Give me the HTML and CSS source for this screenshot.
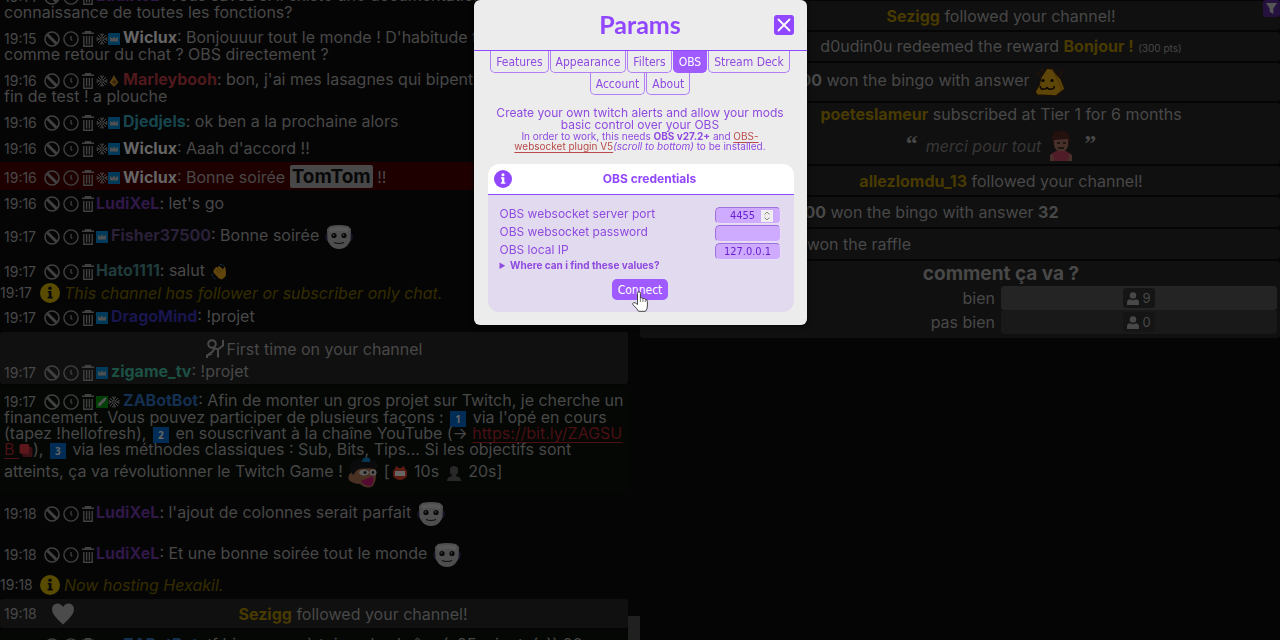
FILE: index.html
```html
<!DOCTYPE html>
<html lang="fr">
<head>
<meta charset="utf-8">
<title>Twitch chat</title>
<link rel="stylesheet" href="styles.css">
</head>
<body>
<svg class="sprite" aria-hidden="true">
  <symbol id="ban" viewBox="0 0 16 16"><circle cx="8" cy="8" r="7" fill="none" stroke="currentColor" stroke-width="1.6"/><path d="M3.4 3.8 12.4 12.6" stroke="currentColor" stroke-width="3"/></symbol>
  <symbol id="clock" viewBox="0 0 16 16"><circle cx="8" cy="8" r="7.1" fill="none" stroke="currentColor" stroke-width="1.4"/><path d="M8 5V8.4L9.4 9.6" fill="none" stroke="currentColor" stroke-width="1.3"/></symbol>
  <symbol id="trash" viewBox="0 0 12 16"><path d="M0 2.3H12M3.5 2V.7h5V2M1.8 5V15.2H10.2V5M4.6 5v8.5M7.4 5v8.5" fill="none" stroke="currentColor" stroke-width="1.4"/></symbol>
  <symbol id="flake" viewBox="0 0 12 12"><path d="M6 .5v11M.5 6h11M2 2l8 8M10 2l-8 8M4 .8 6 2.5 8 .8M4 11.200 6 9.500 8 11.200M.8 4 2.500 6 .8 8M11.200 4 9.500 6 11.200 8" stroke="#484848" fill="none" stroke-width="1"/><circle cx="6" cy="6" r="1.600" fill="#222"/></symbol>
  <symbol id="crown" viewBox="0 0 12 12"><path fill="#003a5a" d="M0 0h12v12H0z"/><path fill="#505050" d="M2 3.800 4.200 5.800 6 3.600 7.800 5.800 10 3.800V8.600H2z"/></symbol>
  <symbol id="gem" viewBox="0 0 12 12"><path d="M6 0 10.500 7.500 6 12 1.500 7.500z" fill="#4c3611"/><path d="M6 1v10L2 7.500z" fill="#5a3e10"/><circle cx="6" cy="7" r="1.600" fill="#2b2008"/></symbol>
  <symbol id="sword" viewBox="0 0 12 12"><path fill="#003f05" d="M0 0h12v12H0z"/><path d="M10.500 1.500 10 4 5 9 3 7 8 2zM2.500 6.500 5.600 9.600 4.600 10 3.700 9.400 2.200 10.600 1.500 9.900 2.700 8.400 2 7.300z" fill="#555"/></symbol>
  <symbol id="info" viewBox="0 0 20 20"><circle cx="10" cy="10" r="10" fill="currentColor"/><g class="info-mark"><circle cx="10" cy="5.200" r="1.700"/><path d="M7.800 8h3.700v5.800h1.200v1.600H7.600v-1.600h1.200V9.600H7.800z"/></g></symbol>
  <symbol id="face" viewBox="0 0 30 28"><path d="M1 14q0-3 4-6v12q-4-3-4-6zM29 14q0-3-4-6v12q4-3 4-6z" fill="#171225"/><path d="M6 3Q15 1 24 3L27 6 26.500 17Q25 22 20 25 15 27 10 25 5 22 3.500 17L3 6z" fill="#4e4e4e"/><path d="M6 5Q15 3 24 5V9Q15 7 6 9z" fill="#585858"/><circle cx="10" cy="12.500" r="2.600" fill="#080808"/><circle cx="20" cy="12.500" r="2.600" fill="#080808"/><circle cx="9.500" cy="12" r=".8" fill="#555"/><circle cx="19.500" cy="12" r=".8" fill="#555"/><path d="M10 19.500q5 2 10 0" fill="none" stroke="#111" stroke-width="1.200"/></symbol>
  <symbol id="hand" viewBox="0 0 16 16"><path d="M2.500 6 4 4.500 5 3 6.500 3.500 8 2 9.500 3 12 5.500 13 3 14.500 3.500 15 9 14.500 12.500 11 15.500 8 14.500 2.500 8.500z" fill="#60450d"/><path d="M4.500 5l4 4.500M6.500 3.500l4 4.500" stroke="#3d2c0b" stroke-width=".7"/><path d="M9 .7q3-.2 4.500 1.500M1 10q.5 4 4 5" fill="none" stroke="#0a3c50" stroke-width="1" stroke-dasharray="2 1"/></symbol>
  <symbol id="heart" viewBox="0 0 22 22"><path d="M11 21.500Q0 12 0 6.500 0 1 5.500 .5 9 .5 11 4 13 .5 16.500 .5 22 1 22 6.500 22 12 11 21.500z" fill="#4b4b4b"/></symbol>
  <symbol id="user" viewBox="0 0 12 13"><circle cx="6" cy="3.500" r="3.200" fill="currentColor"/><path d="M0 13V10.500Q0 7.600 3.200 7.300Q6 9 8.800 7.300 12 7.600 12 10.500V13z" fill="currentColor"/></symbol>
</svg>

<main class="app">
  <section class="chat">
    <article class="msg"><time>19:14</time><span class="tools"><svg class="i16"><use href="#ban"/></svg><svg class="i16"><use href="#clock"/></svg><svg class="i12"><use href="#trash"/></svg></span><b class="ludi">LudiXeL</b>: Vous savez si il existe une documentation pour prendre connaissance de toutes les fonctions?</article>
    <article class="msg"><time>19:15</time><span class="tools"><svg class="i16"><use href="#ban"/></svg><svg class="i16"><use href="#clock"/></svg><svg class="i12"><use href="#trash"/></svg></span><span class="badges"><svg><use href="#flake"/></svg><svg><use href="#crown"/></svg></span><b>Wiclux</b>: Bonjouuur tout le monde ! D'habitude tu utilises quoi comme retour du chat ? OBS directement ?</article>
    <article class="msg"><time>19:16</time><span class="tools"><svg class="i16"><use href="#ban"/></svg><svg class="i16"><use href="#clock"/></svg><svg class="i12"><use href="#trash"/></svg></span><span class="badges"><svg><use href="#flake"/></svg><svg><use href="#gem"/></svg></span><b class="marley">Marleybooh</b>: bon, j'ai mes lasagnes qui bipent, c'est donc bien la fin de test ! a plouche</article>
    <article class="msg"><time>19:16</time><span class="tools"><svg class="i16"><use href="#ban"/></svg><svg class="i16"><use href="#clock"/></svg><svg class="i12"><use href="#trash"/></svg></span><span class="badges"><svg><use href="#flake"/></svg><svg><use href="#crown"/></svg></span><b class="djed">Djedjels</b>: ok ben a la prochaine alors</article>
    <article class="msg"><time>19:16</time><span class="tools"><svg class="i16"><use href="#ban"/></svg><svg class="i16"><use href="#clock"/></svg><svg class="i12"><use href="#trash"/></svg></span><span class="badges"><svg><use href="#flake"/></svg><svg><use href="#crown"/></svg></span><b>Wiclux</b>: Aaah d'accord !!</article>
    <article class="msg mention"><time>19:16</time><span class="tools"><svg class="i16"><use href="#ban"/></svg><svg class="i16"><use href="#clock"/></svg><svg class="i12"><use href="#trash"/></svg></span><span class="badges"><svg><use href="#flake"/></svg><svg><use href="#crown"/></svg></span><b>Wiclux</b>: Bonne soirée <mark>TomTom</mark> !!</article>
    <article class="msg"><time>19:16</time><span class="tools"><svg class="i16"><use href="#ban"/></svg><svg class="i16"><use href="#clock"/></svg><svg class="i12"><use href="#trash"/></svg></span><b class="ludi">LudiXeL</b>: let's go</article>
    <article class="msg"><time>19:17</time><span class="tools"><svg class="i16"><use href="#ban"/></svg><svg class="i16"><use href="#clock"/></svg><svg class="i12"><use href="#trash"/></svg></span><span class="badges"><svg><use href="#crown"/></svg></span><b class="fisher">Fisher37500</b>: Bonne soirée <svg class="emote"><use href="#face"/></svg></article>
    <article class="msg"><time>19:17</time><span class="tools"><svg class="i16"><use href="#ban"/></svg><svg class="i16"><use href="#clock"/></svg><svg class="i12"><use href="#trash"/></svg></span><b class="hato">Hato1111</b>: salut <svg class="emoji hand"><use href="#hand"/></svg></article>
    <p class="notice"><time>19:17</time><svg><use href="#info"/></svg><em>This channel has follower or subscriber only chat.</em></p>
    <article class="msg"><time>19:17</time><span class="tools"><svg class="i16"><use href="#ban"/></svg><svg class="i16"><use href="#clock"/></svg><svg class="i12"><use href="#trash"/></svg></span><span class="badges"><svg><use href="#crown"/></svg></span><b class="drago">DragoMind</b>: !projet</article>
    <div class="first">
      <h2><svg viewBox="0 0 18 20" fill="none" stroke="currentColor" stroke-width="2"><circle cx="6" cy="5" r="3.800"/><path d="M1 19V16.500L6 13M7 9 12 10.500 17 6.500V1M6 13.500 8 10M12 10.500V18.500M1 16.500 6 14.500"/></svg>First time on your channel</h2>
      <article class="msg"><time>19:17</time><span class="tools"><svg class="i16"><use href="#ban"/></svg><svg class="i16"><use href="#clock"/></svg><svg class="i12"><use href="#trash"/></svg></span><span class="badges"><svg><use href="#crown"/></svg></span><b class="zigame">zigame_tv</b>: !projet</article>
    </div>
    <article class="msg mod"><time>19:17</time><span class="tools"><svg class="i16"><use href="#ban"/></svg><svg class="i16"><use href="#clock"/></svg><svg class="i12"><use href="#trash"/></svg></span><span class="badges"><svg><use href="#sword"/></svg><svg><use href="#flake"/></svg></span><b class="bot">ZABotBot</b>: Afin de monter un gros projet sur Twitch, je cherche un financement. Vous pouvez participer de plusieurs façons : <span class="key">1</span> via l'opé en cours (tapez !hellofresh), <span class="key">2</span> en souscrivant à la chaîne YouTube (→ <a href="#">https://bit.ly/ZAGSUB <svg class="copy" viewBox="0 0 14 14"><rect x="3" y="3" width="11" height="11" rx="2" fill="#3a1114"/><rect width="10.500" height="10.500" rx="2" fill="#5c171b"/></svg></a>), <span class="key">3</span> via les méthodes classiques : Sub, Bits, Tips... Si les objectifs sont atteints, ça va révolutionner le Twitch Game ! <svg class="cap" viewBox="0 0 32 32"><path d="M4 12 28 11Q31 21 26 29 20 33 13 27 6 27 2 23 0 18 4 16z" fill="#4a3022"/><path d="M3 13Q3 4 12 2 22 0 27 3 31 5 31 11L27 12Q17 9 10 13L6 18z" fill="#0b0b0d"/><path d="M16 1.500Q20-.5 23 1.500L23 5 15 5z" fill="#083655"/><ellipse cx="17" cy="15.500" rx="5" ry="3" fill="#5c5c5c"/><ellipse cx="26" cy="15.500" rx="3.500" ry="3" fill="#5c5c5c"/><circle cx="18" cy="15.500" r="1.500" fill="#111"/><circle cx="26" cy="15.500" r="1.400" fill="#111"/><path d="M14 24 26 19Q27 27 24 29 17 29 14 24z" fill="#540a31"/></svg> [<svg class="emoji tag" viewBox="0 0 16 16"><path d="M4 1 7 3H9L12 1 13 4 15 6V11Q12 15 8 15 4 15 1 11V6L3 4z" fill="#5c1b10"/><path d="M3 6h10v5H3z" fill="#666"/></svg> 10s <svg class="emoji bust" viewBox="0 0 16 16"><path d="M4 3Q8-1 12 3V8L10 10V11Q15 12 15 16H1Q1 12 6 11V10L4 8z" fill="#282828"/></svg> 20s]</article>
    <article class="msg"><time>19:18</time><span class="tools"><svg class="i16"><use href="#ban"/></svg><svg class="i16"><use href="#clock"/></svg><svg class="i12"><use href="#trash"/></svg></span><b class="ludi">LudiXeL</b>: l'ajout de colonnes serait parfait <svg class="emote"><use href="#face"/></svg></article>
    <article class="msg"><time>19:18</time><span class="tools"><svg class="i16"><use href="#ban"/></svg><svg class="i16"><use href="#clock"/></svg><svg class="i12"><use href="#trash"/></svg></span><b class="ludi">LudiXeL</b>: Et une bonne soirée tout le monde <svg class="emote"><use href="#face"/></svg></article>
    <p class="notice"><time>19:18</time><svg><use href="#info"/></svg><em>Now hosting Hexakil.</em></p>
    <div class="event follow"><div class="lead"><time>19:18</time><svg><use href="#heart"/></svg></div><p><b>Sezigg</b> followed your channel!</p></div>
    <article class="msg mod"><time>19:18</time><span class="tools"><svg class="i16"><use href="#ban"/></svg><svg class="i16"><use href="#clock"/></svg><svg class="i12"><use href="#trash"/></svg></span><span class="badges"><svg><use href="#sword"/></svg><svg><use href="#flake"/></svg></span><b class="bot">ZABotBot</b>: tf bienvenue à toi sur la chaîne (x25 minute(s)) 20</article>
    <span class="thumb"></span>
  </section>

  <section class="activity">
    <div class="event"><div class="lead"></div><p><b>Sezigg</b> followed your channel!</p></div>
    <div class="event"><div class="lead"></div><p>d0udin0u redeemed the reward <b>Bonjour !</b> <small>(300 pts)</small></p></div>
    <div class="event start tall"><div class="lead"></div><p><strong>Fisher37500</strong> won the bingo with answer <svg class="cheese" viewBox="0 0 32 32"><path d="M3 5 5 10M28 4 26 10M8 3 9 7" stroke="#2a120a" stroke-width="1.500"/><path d="M13 2 18 3 27 13 31 23 26 27 22 30 3 29 1 26 5 19 7 11z" fill="#5e4508" stroke="#181006" stroke-width="1.500"/><path d="M18 3 24 14 28 23 23 28" stroke="#4a320a" fill="none"/><circle cx="9" cy="14.500" r="1.600" fill="#090500"/><circle cx="18" cy="14.500" r="1.600" fill="#090500"/><path d="M6 20q1 4 4 3 3 0 3-2 1 3 4 2 4 0 3-3" fill="none" stroke="#0e0900" stroke-width="1.600"/></svg></p></div>
    <div class="event sub"><div class="lead"></div><div class="stack"><p><b>poeteslameur</b> subscribed at Tier 1 for 6 months</p><blockquote><span>“</span><em>merci pour tout</em><svg viewBox="0 0 24 32"><path d="M4 13Q1 4 7 2 16-2 20 5L21 12 18 18H6z" fill="#24100e"/><path d="M5 10 19 9 19 16Q17 22 12 22 6 21 5 15z" fill="#48302a"/><path d="M8 13h3M14 13h3M9 18h6" stroke="#130b0a" stroke-width="1.500"/><path d="M7 21H17L22 24 23 31H1L2 24z" fill="#501c28"/><path d="M1 25 4 24 5 31H1zM23 25 20 24 19 31h4z" fill="#4a302a"/></svg><span>”</span></blockquote></div></div>
    <div class="event"><div class="lead"></div><p><b>allezlomdu_13</b> followed your channel!</p></div>
    <div class="event start wide"><div class="lead"></div><p><strong>Fisher37500</strong> won the bingo with answer <strong>32</strong></p></div>
    <div class="event start wide"><div class="lead"></div><p><strong>LudiXeL_1</strong> won the raffle</p></div>
    <div class="event poll"><div class="lead"></div><div class="stack"><h2>comment ça va ?</h2>
      <div class="choices">
        <span>bien</span><div class="bar win"><span><svg><use href="#user"/></svg>9</span></div>
        <span>pas bien</span><div class="bar"><span><svg><use href="#user"/></svg>0</span></div>
      </div></div></div>
    <button class="filter" aria-label="Filter"><svg viewBox="0 0 12 14"><path d="M0 1H12L8 7V13L4 10.500V7z" fill="#555"/></svg></button>
  </section>
</main>

<div class="overlay">
  <section class="modal" role="dialog" aria-label="Params">
    <header class="head"><h1>Params</h1><button class="close" aria-label="Close"><svg viewBox="0 0 14 14"><path d="M1.500 1.500l11 11M12.500 1.500l-11 11" stroke="#fff" stroke-width="1.800" stroke-linecap="round"/></svg></button></header>
    <nav class="tabs"><button>Features</button><button>Appearance</button><button>Filters</button><button class="on">OBS</button><button>Stream Deck</button><button>Account</button><button>About</button></nav>
    <p class="intro">Create your own twitch alerts and allow your mods basic control over your OBS</p>
    <p class="note">In order to work, this needs <b>OBS v27.2+</b> and <a href="#">OBS-websocket plugin V5</a><i>(scroll to bottom)</i> to be installed.</p>
    <form class="card">
      <header><svg><use href="#info"/></svg><h2>OBS credentials</h2></header>
      <div class="body">
        <div class="row"><label for="port">OBS websocket server port</label><span class="field num"><input id="port" type="number" value="4455"><svg viewBox="0 0 12 12"><path fill="#eee" d="M0 0h12v12H0z"/><path d="M3.500 4.500 6 2 8.500 4.500M3.500 7.500 6 10 8.500 7.500" fill="none" stroke="#888"/></svg></span></div>
        <div class="row"><label for="pass">OBS websocket password</label><span class="field"><input id="pass" type="password"></span></div>
        <div class="row"><label for="ip">OBS local IP</label><span class="field"><input id="ip" type="text" value="127.0.0.1"></span></div>
        <details><summary>Where can i find these values?</summary></details>
        <button type="button" class="connect">Connect<svg class="pointer" viewBox="0 0 16 21"><path d="M5.500 12V2.300Q5.500.7 7 .7 8.400.7 8.400 2.300V7Q10 6 10.900 7.600 12.600 6.800 13.300 8.500 15.400 8 15.400 10.500V15Q15.400 18 13.500 20.300H6.600Q5 17.500 1 13.800 .2 12.400 1.500 11.700 3 11 5.500 13.600z" fill="#fff" stroke="#333" stroke-width=".9"/><path d="M8.400 7v4M10.900 8v3M13.300 9v2" stroke="#555" stroke-width=".8"/></svg></button>
      </div>
    </form>
  </section>
</div>
</body>
</html>
```
FILE: styles.css
```css
* { box-sizing: border-box; }
html, body { height: 100%; }
body {
  margin: 0;
  overflow: hidden;
  background: #050505;
  color: #484848;
  font: 400 16px/16px Inter, "Liberation Sans", sans-serif;
}
p, h1, h2, blockquote { margin: 0; }
button, input { font: inherit; }
.sprite { position: absolute; width: 0; height: 0; }

.app { display: grid; grid-template-columns: 1fr 1fr; height: 100%; overflow: hidden; }

/* Chat */
.chat { position: relative; height: 100vh; margin-top: -18px; padding-right: 12px; min-width: 0; }
.msg { padding: 5px 4px 4px; }
.msg > b { font-weight: 700; color: #666; }
time { font-size: 14px; line-height: 12px; vertical-align: middle; }
.msg > time { display: inline-block; width: 40px; }
.tools { display: inline-flex; gap: 3px; vertical-align: middle; height: 17px; margin: -1px 2px -1px 0; align-items: center; color: #414141; }
.i16 { width: 16px; height: 16px; }
.i12 { width: 12px; height: 16px; }
.badges { display: inline-flex; vertical-align: middle; margin-right: 3px; }
.badges svg { width: 12px; height: 12px; }
.msg > .ludi { color: #301848; }
.msg > .marley { color: #4f191d; }
.msg > .djed { color: #16454d; }
.msg > .fisher { color: #2a2038; }
.msg > .hato { color: #203b3b; }
.msg > .drago { color: #19164d; }
.msg > .zigame { color: #1c5145; }
.msg > .bot { color: #142f50; }
.mention { background: #1f0000; padding: 7px 4px 4px; margin-top: 1px; }
mark { background: #484848; color: #080808; font-size: 19px; font-weight: 700; padding: 0 2px; border-radius: 2px; }
.emote { width: 30px; height: 32px; vertical-align: middle; }
.emoji { width: 16px; height: 16px; vertical-align: middle; margin: -1px 2px; }
.key { display: inline-block; width: 16px; height: 16px; margin: -2px 2px; background: #002c55; color: #666; font: 700 10px/16px "Noto Sans", sans-serif; text-align: center; vertical-align: middle; }
.cap { width: 32px; height: 32px; vertical-align: middle; }
.copy { width: 14px; height: 13px; vertical-align: middle; }
.mod { background: #040704; }
.mod a { color: #4a1014; word-break: break-all; text-underline-offset: 3px; }
.notice { display: flex; align-items: center; height: 20px; }
.notice svg { width: 20px; height: 20px; margin-left: 4px; color: #594b00; }
.notice time { width: 36px; }
.notice em { margin-left: 4px; color: #352d00; }
.info-mark { fill: var(--mark, #080808); }
.first { margin: 3px 0; padding-top: 8px; height: 52px; background: #101010; border-radius: 3px; }
.first h2 { display: flex; align-items: center; justify-content: center; gap: 3px; height: 18px; font-size: 16px; font-weight: 400; }
.first h2 svg { width: 18px; height: 20px; }

/* Events */
.event { display: flex; align-items: center; min-height: 29px; background: #101010; border-radius: 3px; }
.event .lead { flex: none; width: 82px; }
.event > p, .stack { flex: 1; text-align: center; }
.event b { color: #493b00; font-weight: 700; }
.event strong, .poll h2 { font-weight: 700; }
.event small { font-size: 10px; }
.follow { margin: 4px 0 3px; }
.follow .lead { width: 78px; display: flex; align-items: center; padding-left: 4px; }
.follow time { width: 48px; }
.follow svg { width: 22px; height: 22px; }
.thumb { position: absolute; right: 0; bottom: -18px; width: 12px; height: 24px; background: #202020; }

.activity { position: relative; display: flex; flex-direction: column; gap: 2px; padding-top: 1px; min-width: 0; align-self: start; }
.activity .start > p { text-align: left; }
.activity .tall { height: 38px; }
.activity .wide { min-height: 30px; }
.wide .lead { width: 86px; }
.cheese { width: 32px; height: 32px; vertical-align: middle; }
.sub { height: 61px; }
.sub .stack { align-self: flex-start; padding-top: 3px; }
blockquote { display: flex; align-items: center; justify-content: center; height: 32px; margin-top: 8px; }
blockquote span { align-self: flex-start; font: 700 24px/26px "Liberation Serif", serif; }
blockquote em { margin: 0 8px; color: #373737; }
blockquote svg { width: 24px; height: 32px; margin-right: 11px; }
.poll { height: 77px; align-items: flex-start; }
.poll h2 { font-size: 19px; line-height: 24px; padding-top: 1px; }
.choices { display: grid; grid-template-columns: 273fr 276fr; align-items: center; column-gap: 6px; padding-right: 3px; text-align: right; }
.bar { height: 24px; display: flex; align-items: center; justify-content: center; background: #191919; border-radius: 3px; }
.win { background: #242424; }
.bar span { display: flex; align-items: center; gap: 3px; padding: 2px 4px; background: #151515; border-radius: 3px; font-size: 13px; }
.bar svg { width: 12px; height: 13px; }
.filter { position: absolute; top: 0; right: 0; width: 17px; height: 17px; padding: 0; border: 0; border-radius: 3px; background: #25123f; display: grid; place-items: center; }
.filter svg { width: 11px; height: 13px; }

/* Modal */
.overlay { position: fixed; inset: 0; display: flex; justify-content: center; align-items: flex-start; font-weight: 400; color: #8f4ae0; }
.modal { width: 333px; max-width: 100%; padding-bottom: 13px; background: #ececec; border-radius: 6px; box-shadow: 0 0 5px #000; }
.head { position: relative; display: grid; place-items: center; height: 51px; border-bottom: 1px solid #9147ff; }
.head h1 { font: 700 25px/48px Lato, sans-serif; color: #9147ff; padding-bottom: 2px; }
.close { position: absolute; top: 15px; right: 13px; width: 20px; height: 20px; padding: 0; border: 0; border-radius: 3px; background: #9147ff; display: grid; place-items: center; }
.close svg { width: 14px; height: 14px; }
.tabs { display: flex; flex-wrap: wrap; justify-content: center; column-gap: 1px; padding: 0 12px; }
.tabs button { height: 22px; padding: 0 5px; background: none; color: #8f4ae0; border: 1px solid #b07ff5; border-top: 0; border-radius: 0 0 5px 5px; font: 12px/20px "DejaVu Sans Condensed", "Noto Sans", sans-serif; }
.tabs .on { background: #9f5bff; border-color: #9f5bff; color: #fff; }
.intro { margin: 12px 14px 0; font-size: 12px; line-height: 12px; text-align: center; }
.note { margin: 0 40px; font-size: 10px; line-height: 10px; text-align: center; }
.note a { color: #b84a4a; text-underline-offset: 2px; }
.card { --mark: #fff; margin: 13px 13px 0 14px; border-radius: 11px; background: #e2daee; overflow: hidden; }
.card header { display: grid; grid-template-columns: 18px 1fr; align-items: center; height: 31px; padding: 0 6px; background: #fff; border-bottom: 1px solid #9147ff; color: #9147ff; }
.card header svg { width: 18px; height: 18px; }
.card h2 { font-size: 12px; font-weight: 700; text-align: center; }
.body { display: flex; flex-direction: column; padding: 12px 13px 12px 12px; }
.row { display: flex; justify-content: space-between; height: 18px; font-size: 12px; line-height: 13px; }
.field { position: relative; width: 66px; height: 17px; }
.field input { display: block; width: 100%; height: 17px; padding: 0 4px; border: 1px solid #9e72dc; border-right-color: #e8dcfa; border-bottom-color: #e8dcfa; border-radius: 5px; background: #ceabff; color: #6a1fd0; font: 11px/15px "DejaVu Sans Condensed", "Noto Sans", sans-serif; text-align: center; }
.num input { padding-right: 14px; appearance: textfield; }
.num input::-webkit-inner-spin-button { appearance: none; }
.num svg { position: absolute; right: 8px; top: 3px; width: 12px; height: 12px; }
details { margin-top: -2px; }
summary { font-size: 10px; font-weight: 700; line-height: 12px; }
.connect { position: relative; align-self: center; height: 21px; margin-top: 8px; padding: 0 6px; border: 0; border-radius: 5px; background: #9f5bff; color: #fff; font: 12px/20px "DejaVu Sans Condensed", "Noto Sans", sans-serif; }
.pointer { position: absolute; left: 20px; top: 12px; width: 16px; height: 21px; z-index: 1; }
```
